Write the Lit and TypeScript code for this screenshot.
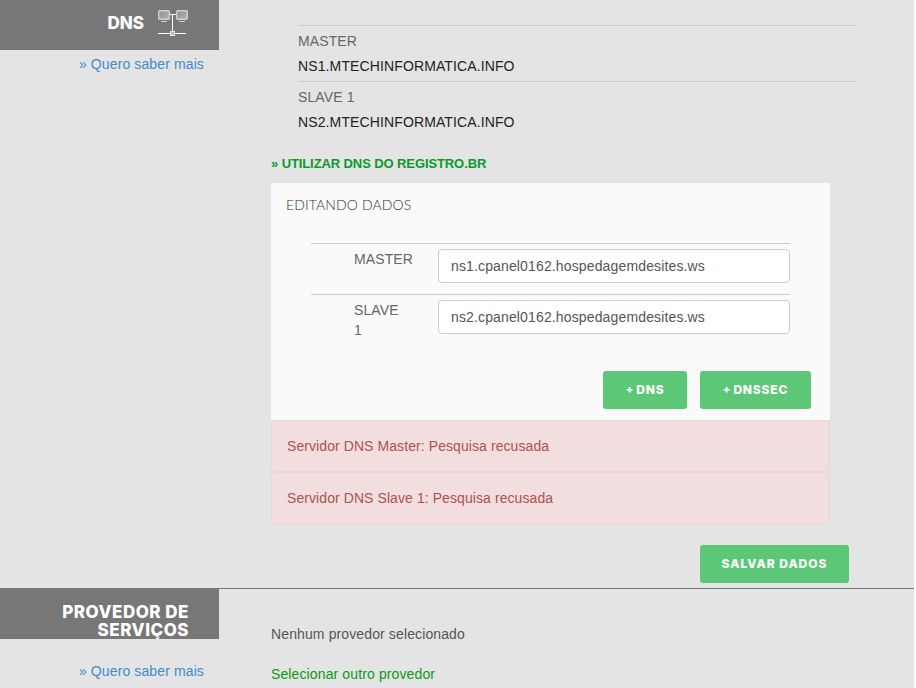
import { LitElement, html, css, svg } from "lit";
import { customElement } from "lit/decorators.js";

const netIcon = svg`<svg class="icon" width="32" height="28" viewBox="0 0 32 28">
  <defs><linearGradient id="sc" x1="0" y1="0" x2="1" y2="1"><stop offset="0" stop-color="#8c8c8c"/><stop offset="1" stop-color="#b4b4b4"/></linearGradient></defs>
  <g stroke="#cfcfcf" stroke-width="1.4" fill="url(#sc)">
    <rect x="1.7" y="1.7" width="10.6" height="8.6" rx="1"/>
    <rect x="19.7" y="1.7" width="10.6" height="8.6" rx="1"/>
  </g>
  <path d="M4 12.5h6M22 12.5h6" stroke="#ccc" stroke-width="1"/>
  <path d="M13 5.5h6M15.5 5.5V24M1 24.5h28" stroke="#fff" stroke-width="1" fill="none"/>
  <rect x="13.5" y="22.5" width="4" height="4" fill="#bbb" stroke="#eee" stroke-width="1"/>
</svg>`;

@customElement("app-root")
export class AppRoot extends LitElement {
  static styles = css`
    :host {
      display: block;
      width: 914px;
      height: 688px;
      overflow: hidden;
      background: #e4e4e4;
      font-family: "Liberation Sans", Arial, sans-serif;
      font-size: 14px;
      line-height: 20px;
      letter-spacing: 0.12px;
      color: #555;
    }
    .section { display: grid; grid-template-columns: 219px 1fr; }
    .side { display: flex; flex-direction: column; }
    .head {
      background: #777;
      color: #fff;
      font-family: "Inter", sans-serif;
      font-weight: 800;
      text-align: right;
      box-sizing: border-box;
      letter-spacing: 0;
    }
    .dns-head {
      height: 50px;
      display: flex;
      justify-content: flex-end;
      align-items: flex-start;
      gap: 13px;
      padding: 14px 30px 0 0;
      font-size: 17px;
      line-height: 18px;
    }
    .icon { margin-top: -5px; display: block; }
    .more { color: #428bca; text-align: right; padding-right: 15px; }
    .more.first { margin-top: 4px; }
    .more.second { margin-top: 22px; }
    .main-top { height: 588px; box-sizing: border-box; padding: 25px 0 0 52px; }
    .readonly { margin: 0 57px 0 27px; }
    .ro-row { border-top: 1px solid #ccc; height: 56px; padding-top: 5px; box-sizing: border-box; margin: 0; }
    .ro-label { color: #666; height: 20px; margin-bottom: 5px; line-height: 20px; }
    .ro-value { color: #222; line-height: 20px; }
    .use-registro {
      color: #0a9a2a;
      font-weight: 700;
      margin-top: 17px;
      height: 20px;
      font-size: 13px;
      letter-spacing: -0.1px;
    }
    .panel {
      width: 559px;
      margin-top: 9px;
      background: #fafafa;
      box-sizing: border-box;
      height: 237px;
      padding: 12px 15px 0;
      display: flex;
      flex-direction: column;
    }
    .panel-title {
      font-family: "Lato", sans-serif;
      font-weight: 300;
      color: #333;
      font-size: 14px;
      line-height: 20px;
    }
    .table { margin: 28px 25px 0 25px; width: 479px; }
    .row {
      display: grid;
      grid-template-columns: 127px 352px;
      border-top: 1px solid #ccc;
      box-sizing: border-box;
      height: 51px;
      padding-top: 5px;
    }
    .row + .row { height: 60px; }
    .row-label { padding: 0 30px 0 43px; color: #666; }
    input {
      box-sizing: border-box;
      width: 352px;
      height: 34px;
      border: 1px solid #ccc;
      border-radius: 4px;
      background: #fff;
      padding: 0 12px;
      font: 14px/20px "Liberation Sans", Arial, sans-serif;
      letter-spacing: 0.14px;
      color: #555;
      outline: none;
    }
    .actions { display: flex; justify-content: flex-end; gap: 13px; margin: 17px 4px 0 0; }
    .btn {
      height: 38px;
      display: inline-flex;
      align-items: center;
      justify-content: center;
      gap: 3px;
      background: #5cc877;
      color: #fff;
      border: 0;
      border-radius: 3px;
      font-family: "Inter", sans-serif;
      font-size: 12px;
      font-weight: 800;
      box-sizing: border-box;
      letter-spacing: 0.8px;
      padding: 0 0 2px;
    }
    .plus { font-size: 11px; letter-spacing: 0; }
    .b-dns { width: 84px; }
    .b-sec { width: 111px; }
    .b-save { width: 149px; letter-spacing: 1px; }
    .alert {
      width: 559px;
      height: 52px;
      box-sizing: border-box;
      background: #f2dede;
      border: 1px solid #ebd5d5;
      border-radius: 4px;
      color: #b0504e;
      display: flex;
      align-items: center;
      padding: 0 15px;
      letter-spacing: 0.08px;
    }
    .save { display: flex; justify-content: flex-end; width: 578px; margin-top: 21px; }
    .divider { border-top: 1px solid #777; }
    .head-prov {
      height: 51px;
      margin-top: -1px;
      padding: 15px 30px 0 30px;
      font-size: 17px;
      line-height: 18px;
      letter-spacing: 0.5px;
    }
    .main-bottom { padding: 35px 0 0 52px; }
    .none { color: #555; }
    .select { color: #0a9a1a; margin-top: 20px; }
  `;

  render() {
    return html`
      <div class="section">
        <div class="side">
          <div class="head dns-head"><span>DNS</span>${netIcon}</div>
          <div class="more first">» Quero saber mais</div>
        </div>
        <div class="main-top">
          <div class="readonly">
            <div class="ro-row"><div class="ro-label">MASTER</div><div class="ro-value">NS1.MTECHINFORMATICA.INFO</div></div>
            <div class="ro-row"><div class="ro-label">SLAVE 1</div><div class="ro-value">NS2.MTECHINFORMATICA.INFO</div></div>
          </div>
          <div class="use-registro">» UTILIZAR DNS DO REGISTRO.BR</div>
          <div class="panel">
            <div class="panel-title">EDITANDO DADOS</div>
            <div class="table">
              <div class="row"><div class="row-label">MASTER</div><input .value=${"ns1.cpanel0162.hospedagemdesites.ws"} /></div>
              <div class="row"><div class="row-label">SLAVE 1</div><input .value=${"ns2.cpanel0162.hospedagemdesites.ws"} /></div>
            </div>
            <div class="actions">
              <button class="btn b-dns"><span class="plus">+</span>DNS</button>
              <button class="btn b-sec"><span class="plus">+</span>DNSSEC</button>
            </div>
          </div>
          <div class="alert">Servidor DNS Master: Pesquisa recusada</div>
          <div class="alert">Servidor DNS Slave 1: Pesquisa recusada</div>
          <div class="save"><button class="btn b-save">SALVAR DADOS</button></div>
        </div>
      </div>
      <div class="divider"></div>
      <div class="section">
        <div class="side">
          <div class="head head-prov">PROVEDOR DE SERVIÇOS</div>
          <div class="more second">» Quero saber mais</div>
        </div>
        <div class="main-bottom">
          <div class="none">Nenhum provedor selecionado</div>
          <div class="select">Selecionar outro provedor</div>
        </div>
      </div>
    `;
  }
}
